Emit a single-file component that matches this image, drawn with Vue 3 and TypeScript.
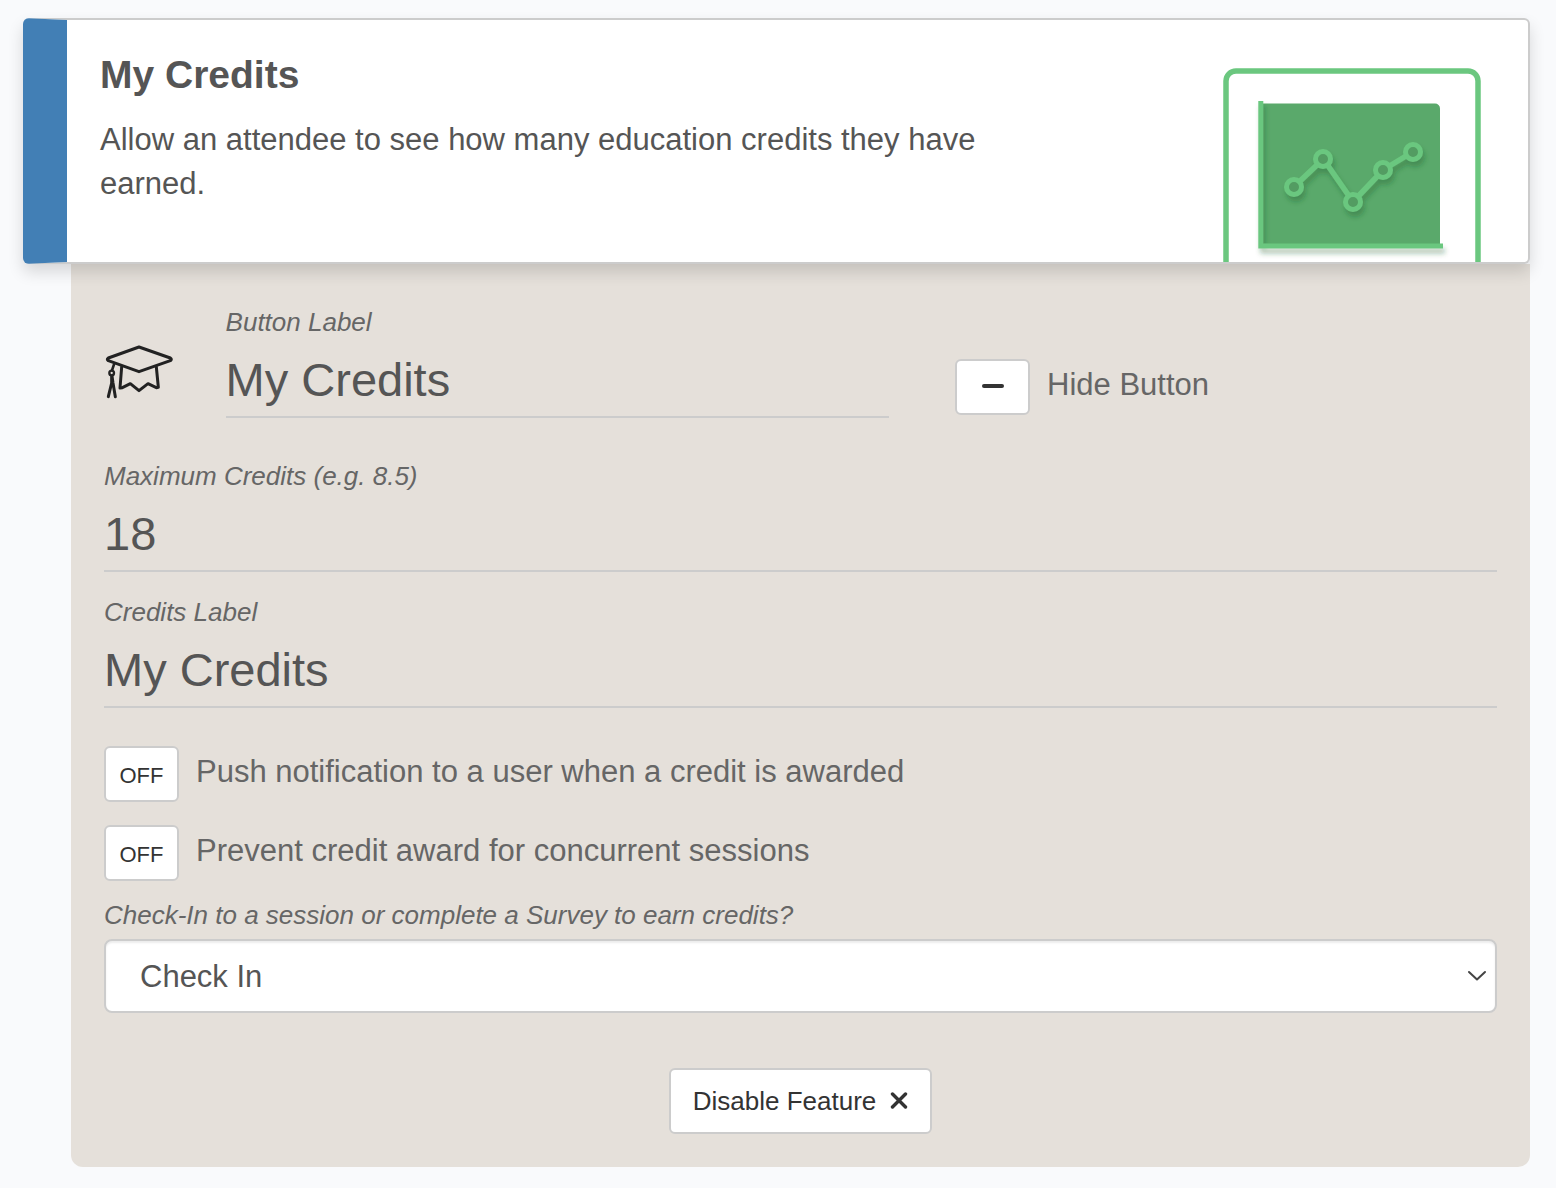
<script setup lang="ts">
import { ref } from 'vue'

const buttonLabel = ref('My Credits')
const maxCredits = ref('18')
const creditsLabel = ref('My Credits')
const earnMethod = ref('Check In')
const hidden = ref(false)

const toggles = ref([
  { id: 'push', text: 'Push notification to a user when a credit is awarded', on: false },
  { id: 'concurrent', text: 'Prevent credit award for concurrent sessions', on: false },
])

const points = [
  [71, 119],
  [100, 91],
  [130, 134],
  [160, 102],
  [190, 84],
]
</script>

<template>
  <main class="page">
    <header class="card">
      <div class="card-text">
        <h1>My Credits</h1>
        <p>Allow an attendee to see how many education credits they have earned.</p>
      </div>
      <svg class="illustration" viewBox="0 0 258 194" aria-hidden="true">
        <defs>
          <filter id="soft" x="-20%" y="-20%" width="150%" height="160%">
            <feDropShadow dx="2" dy="5" stdDeviation="2.5" flood-color="#1e5a2d" flood-opacity="0.35" />
          </filter>
        </defs>
        <rect x="3" y="3" width="252" height="240" rx="10" fill="#fff" stroke="#6bc77f" stroke-width="5.5" />
        <path d="M38 35.500H212a5 5 0 0 1 5 5V178H38z" fill="#5aa96b" />
        <path d="M37.800 33V178H220" fill="none" stroke="#6bc77f" stroke-width="5" filter="url(#soft)" />
        <g fill="none" stroke="#6bc77f" filter="url(#soft)">
          <path d="M76 114 95 96M104.500 97 126 128M135 128.500 155 107.500M166.500 98 183 88" stroke-width="5.500" />
          <circle v-for="p in points" :key="p[0]" :cx="p[0]" :cy="p[1]" r="7.500" stroke-width="5" fill="#529c62" />
        </g>
      </svg>
    </header>

    <form class="panel" @submit.prevent>
      <div class="top-row">
        <div class="col icon-col">
          <svg class="cap" viewBox="27 27 216 168" aria-hidden="true">
            <g fill="none" stroke="#222" stroke-width="9" stroke-linejoin="round" stroke-linecap="round">
              <path d="M132 36 226 69Q232 73 226 77L132 110 40 77Q34 73 40 69Z" />
              <path d="M80 96 75 159 82 158 106 146 132 167 159 146 184 158 190 157 184 96" />
              <path d="M57 88 51 106" stroke-width="8" />
              <circle cx="50" cy="114" r="7" stroke-width="7" />
              <path d="M50 123V144L40 185M51 123 54 144 61 185" stroke-width="9" />
            </g>
          </svg>
        </div>
        <div class="col field">
          <label for="button-label">Button Label</label>
          <input id="button-label" v-model="buttonLabel" type="text" />
        </div>
        <div class="col hide-col">
          <div class="toggle">
            <button id="hide-button" class="icon-button" type="button" :aria-pressed="hidden" @click="hidden = !hidden">
              <svg width="22" height="4" viewBox="0 0 22 4" aria-hidden="true">
                <path d="M2 2H20" stroke="#333" stroke-width="4" stroke-linecap="round" />
              </svg>
            </button>
            <label for="hide-button">Hide Button</label>
          </div>
        </div>
      </div>

      <div class="field max-field">
        <label for="max-credits">Maximum Credits (e.g. 8.5)</label>
        <input id="max-credits" v-model="maxCredits" type="text" inputmode="decimal" />
      </div>
      <div class="field credits-field">
        <label for="credits-label">Credits Label</label>
        <input id="credits-label" v-model="creditsLabel" type="text" />
      </div>

      <div class="toggles">
        <div v-for="t in toggles" :key="t.id" class="toggle">
          <button :id="t.id" type="button" :aria-pressed="t.on" @click="t.on = !t.on">{{ t.on ? 'ON' : 'OFF' }}</button>
          <label :for="t.id">{{ t.text }}</label>
        </div>
      </div>

      <div class="select-field">
        <label for="earn-method">Check-In to a session or complete a Survey to earn credits?</label>
        <div class="select-wrap">
          <select id="earn-method" v-model="earnMethod">
            <option>Check In</option>
            <option>Survey</option>
          </select>
          <svg class="chevron" width="20" height="12" viewBox="0 0 20 12" aria-hidden="true">
            <path d="M2 2 10 9.500 18 2" fill="none" stroke="#444" stroke-width="2" stroke-linecap="round" stroke-linejoin="round" />
          </svg>
        </div>
      </div>

      <div class="actions">
        <button class="disable" type="button">
          Disable Feature
          <svg width="18" height="18" viewBox="0 0 18 18" aria-hidden="true">
            <path d="M2.500 2 15.500 15M15.500 2 2.500 15" stroke="#333" stroke-width="3.400" stroke-linecap="round" />
          </svg>
        </button>
      </div>
    </form>
  </main>
</template>

<style>
body {
  background: #f9fafc;
}
</style>

<style scoped>
.page,
.page * {
  box-sizing: border-box;
}

.page {
  padding: 18px 26px 21px 23px;
  font-family: 'Liberation Sans', Arial, sans-serif;
  font-size: 31px;
  color: #555;
}

button,
input,
select {
  font-family: inherit;
  color: inherit;
}

.card {
  position: relative;
  display: flex;
  justify-content: space-between;
  background: #fff;
  border: 2px solid #ccc;
  border-left: 44px solid #427fb5;
  border-radius: 6px;
  box-shadow: 0 8px 16px rgba(0, 0, 0, 0.14);
}

.card-text {
  width: 66%;
  padding: 27px 33px 56px;
}

h1 {
  margin: 0 0 15px;
  font-size: 39px;
  line-height: 56px;
}

p {
  margin: 0;
  line-height: 44px;
}

.illustration {
  flex: none;
  align-self: flex-end;
  width: 258px;
  height: 194px;
  margin-right: 47px;
}

.panel {
  margin-left: 48px;
  padding: 40px 33px 33px;
  background: #e5e0da;
  border-radius: 0 0 12px 12px;
}

.top-row {
  display: grid;
  grid-template-columns: 1fr 6fr 5fr;
  margin: 0 -33px;
}

.col {
  min-width: 0;
  padding: 0 33px;
}

.icon-col {
  padding-top: 40px;
  padding-right: 0;
}

.cap {
  display: block;
  width: 72px;
  height: 56px;
}

.hide-col {
  padding-top: 55px;
}

.field label,
.select-field label {
  display: block;
  font-size: 26px;
  font-style: italic;
  line-height: 36px;
  color: #666;
}

.field input {
  display: block;
  width: 100%;
  height: 78px;
  padding: 3px 0 0;
  font-size: 47px;
  background: transparent;
  border: 0;
  border-bottom: 2px solid #ccc;
  border-radius: 0;
  outline: none;
}

.max-field {
  margin-top: 40px;
}

.credits-field {
  margin-top: 22px;
}

.toggles {
  display: flex;
  flex-direction: column;
  gap: 23px;
  margin-top: 38px;
}

.toggle {
  display: flex;
  align-items: center;
  gap: 17px;
}

.toggle button {
  display: flex;
  align-items: center;
  justify-content: center;
  width: 75px;
  height: 56px;
  padding: 3px 0 0;
  font-size: 22px;
}

.toggle .icon-button {
  padding: 0 0 2px;
}

.toggle label {
  padding-bottom: 5px;
  line-height: 44px;
  color: #666;
}

button {
  color: #333;
  background: #fff;
  border: 2px solid #ccc;
  border-radius: 6px;
}

.select-field {
  margin-top: 16px;
}

.select-wrap {
  position: relative;
  margin-top: 6px;
}

select {
  display: block;
  width: 100%;
  height: 74px;
  padding: 0 48px 0 34px;
  font-size: 31px;
  appearance: none;
  background: #fff;
  border: 2px solid #ccc;
  border-radius: 8px;
  box-shadow: inset 0 2px 2px rgba(0, 0, 0, 0.08);
}

.chevron {
  position: absolute;
  top: 31px;
  right: 10px;
  pointer-events: none;
}

.actions {
  display: flex;
  justify-content: center;
  margin-top: 55px;
}

.disable {
  display: flex;
  align-items: center;
  gap: 14px;
  height: 66px;
  padding: 0 22px;
  font-size: 26px;
}
</style>
